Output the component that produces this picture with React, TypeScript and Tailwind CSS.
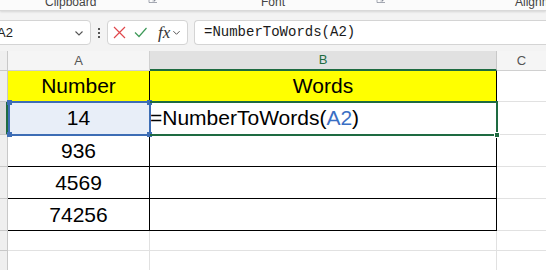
import React from 'react';

const rows = [
  { n: 1, h: 'h-[31px]', a: 'Number', b: 'Words', header: true },
  { n: 2, h: 'h-[33px]', a: '14', b: '', header: false },
  { n: 3, h: 'h-[32px]', a: '936', b: '', header: false },
  { n: 4, h: 'h-[32px]', a: '4569', b: '', header: false },
  { n: 5, h: 'h-[32px]', a: '74256', b: '', header: false },
];

function Launcher() {
  return (
    <svg width="9" height="9" viewBox="0 0 9 9" className="text-gray-500">
      <path d="M1 0.5v8h8" fill="none" stroke="currentColor" strokeWidth="1" opacity="0.6" />
      <path d="M3 3l4 4M7 4.5V7H4.5" fill="none" stroke="currentColor" strokeWidth="1" opacity="0.6" />
    </svg>
  );
}

function Chevron({ size = 10 }: { size?: number }) {
  return (
    <svg width={size} height={size} viewBox="0 0 10 10">
      <path d="M1.5 3.5L5 7l3.5-3.5" fill="none" stroke="#555" strokeWidth="1.1" />
    </svg>
  );
}

export default function App() {
  const cellFont = { fontFamily: '"Liberation Sans", Arial, sans-serif' };
  return (
    <div className="w-[546px] h-[270px] overflow-hidden bg-white relative" style={cellFont}>
      {/* Ribbon bottom */}
      <div className="h-[11px] bg-[#fbfbfb] border-b border-[#d9d9d9] shadow-[0_1px_2px_rgba(0,0,0,0.12)] relative overflow-hidden text-[12px] text-[#444]">
        <span className="absolute left-[45px] top-[-7px]">Clipboard</span>
        <span className="absolute left-[148px] top-[-6px]"><Launcher /></span>
        <span className="absolute left-[261px] top-[-7px]">Font</span>
        <span className="absolute left-[376px] top-[-6px]"><Launcher /></span>
        <span className="absolute left-[515px] top-[-7px]">Alignment</span>
      </div>

      {/* Formula bar */}
      <div className="h-[40px] bg-[#f3f3f3] flex items-center gap-[6px] pt-[3px]">
        <div className="ml-[-10px] w-[101px] h-[25px] bg-white border border-[#d4d4d4] rounded-[4px] flex items-center justify-between pl-[6px] pr-[6px] text-[13px] text-[#222]">
          <span>A2</span>
          <Chevron />
        </div>
        <div className="flex flex-col gap-[2px] mx-[1px]">
          <span className="w-[2px] h-[2px] bg-[#555]" />
          <span className="w-[2px] h-[2px] bg-[#555]" />
          <span className="w-[2px] h-[2px] bg-[#555]" />
        </div>
        <div className="w-[81px] h-[25px] bg-white border border-[#d4d4d4] rounded-[4px] flex items-center pl-[5px] gap-[8px]">
          <svg width="13" height="13" viewBox="0 0 13 13">
            <path d="M1 1l11 11M12 1L1 12" stroke="#e0474c" strokeWidth="1.2" fill="none" />
          </svg>
          <svg width="13" height="11" viewBox="0 0 13 11">
            <path d="M1 5.5l4 4L12.5 1" stroke="#3f9a5a" strokeWidth="1.2" fill="none" />
          </svg>
          <span className="ml-[3px] text-[17px] italic text-[#333]" style={{ fontFamily: '"Liberation Serif", serif' }}>fx</span>
          <span className="ml-[-6px]"><Chevron size={9} /></span>
        </div>
        <div className="flex-1 h-[25px] bg-white border border-[#d4d4d4] rounded-l-[4px] border-r-0 flex items-center pl-[9px] text-[14px] text-[#1a1a1a]" style={{ fontFamily: '"Liberation Mono", monospace' }}>
          =NumberToWords(A2)
        </div>
      </div>

      {/* Column headers */}
      <div className="flex h-[20px] text-[13px]">
        <div className="w-[8px] bg-[#efefef] border-r border-b border-[#c8c8c8]" />
        <div className="w-[142px] bg-[#f5f5f5] border-r border-b border-[#d0d0d0] flex items-center justify-center text-[#555]">A</div>
        <div className="w-[347px] bg-[#e1e1e1] border-r border-[#c8c8c8] border-b-2 border-b-[#1e6b41] flex items-center justify-center text-[#1e6b41]">B</div>
        <div className="flex-1 bg-[#f5f5f5] border-b border-[#d0d0d0] flex items-center justify-center text-[#555]">C</div>
      </div>

      {/* Grid */}
      <div className="relative text-[21px] text-black">
        {rows.map((r) => (
          <div key={r.n} className={`flex ${r.h}`}>
            <div
              className={
                r.n === 2
                  ? 'w-[8px] bg-[#d9d9d9] border-r-2 border-r-[#1e6b41] border-b border-b-[#c8c8c8]'
                  : 'w-[8px] bg-[#efefef] border-r border-b border-[#c8c8c8]'
              }
            />
            <div
              className={
                r.header
                  ? 'w-[142px] bg-[#ffff00] border-r border-b border-black flex items-center justify-center'
                  : r.n === 2
                  ? 'w-[142px] bg-[#e8eef8] border-r border-b border-black flex items-center justify-center'
                  : 'w-[142px] border-r border-b border-black flex items-center justify-center'
              }
            >
              {r.a}
            </div>
            <div
              className={
                r.header
                  ? 'w-[347px] bg-[#ffff00] border-r border-b border-black flex items-center justify-center'
                  : 'w-[347px] border-r border-b border-black flex items-center pl-0'
              }
            >
              {r.header ? r.b : r.n === 2 ? (
                <span>
                  =NumberToWords(<span className="text-[#3a6fc4]">A2</span>)
                </span>
              ) : null}
            </div>
            <div className="flex-1 border-b border-[#e1e1e1]" />
          </div>
        ))}
        {[6, 7].map((n) => (
          <div key={n} className="flex h-[20px]">
            <div className="w-[8px] bg-[#efefef] border-r border-b border-[#c8c8c8]" />
            <div className="w-[142px] border-r border-b border-[#e1e1e1]" />
            <div className="w-[347px] border-r border-b border-[#e1e1e1]" />
            <div className="flex-1 border-b border-[#e1e1e1]" />
          </div>
        ))}

        {/* A2 reference highlight */}
        <div className="absolute left-[8px] top-[30px] w-[143px] h-[35px] border-2 border-[#3d6db5] pointer-events-none">
          <span className="absolute left-[-3px] top-[-3px] w-[5px] h-[5px] bg-[#3d6db5]" />
          <span className="absolute right-[-3px] top-[-3px] w-[5px] h-[5px] bg-[#3d6db5]" />
          <span className="absolute left-[-3px] bottom-[-3px] w-[5px] h-[5px] bg-[#3d6db5]" />
          <span className="absolute right-[-3px] bottom-[-3px] w-[5px] h-[5px] bg-[#3d6db5]" />
        </div>
        {/* B2 active cell */}
        <div className="absolute left-[150px] top-[30px] w-[348px] h-[35px] border-2 border-[#1e6b41] border-l-0 pointer-events-none">
          <span className="absolute right-[-4px] bottom-[-4px] w-[6px] h-[6px] bg-[#1e6b41] border border-white" />
        </div>
      </div>
    </div>
  );
}
